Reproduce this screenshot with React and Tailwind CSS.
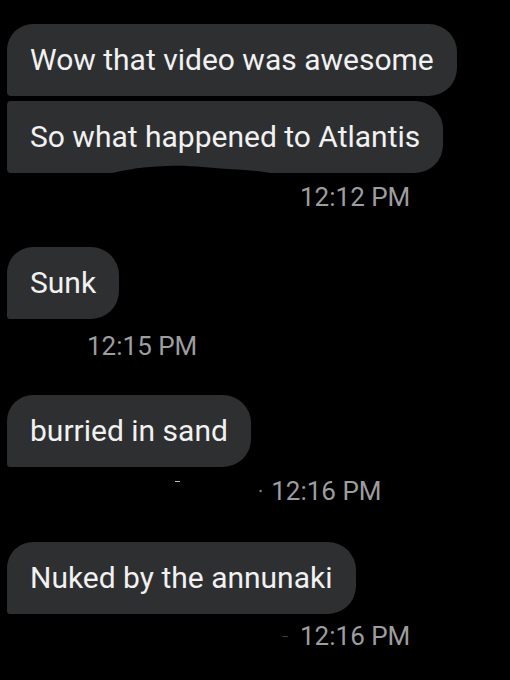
import React from 'react';

const messages = [
    { id: 1, text: 'Wow that video was awesome', shape: 'first', mt: 'mt-[24px]' },
    { id: 2, text: 'So what happened to Atlantis', shape: 'last', mt: 'mt-[5px]', smudge: true },
];

// bubble corner styles: grouped messages share a flat-ish left edge
const shapes = {
    first: 'rounded-tl-[26px] rounded-bl-[4px]',
    last: 'rounded-tl-[4px] rounded-bl-[4px]',
    single: 'rounded-tl-[26px] rounded-bl-[3px]',
};

const Bubble = ({ text, shape = 'single', className = '', smudge = false }) => (
    <div className={`relative ml-[7px] flex h-[72px] w-fit items-center rounded-r-[28px] bg-[#2e2f31] pl-[23px] pr-[23px] ${shapes[shape]} ${className}`}>
        <span className="text-[30px] leading-none text-[#f1f1f1]">{text}</span>
        {smudge && (
            // the black scribble someone drew over the screenshot
            <svg className="absolute left-[90px] top-[62px]" width="190" height="14" viewBox="0 0 190 14">
                <path d="M0 14 C20 8 40 4 70 3 C95 2 110 5 130 6 C150 7 170 8 190 14 Z" fill="#000" />
            </svg>
        )}
    </div>
);

const Stamp = ({ time, className = '', dot = false }) => (
    <div className={`flex h-[30px] items-center text-[26px] leading-none text-[#9c9d9f] ${className}`}>
        {dot && <span className="mr-[8px] text-[20px] text-[#8a8b8d]">·</span>}
        {time}
    </div>
);

export default function App() {
    return (
        <div className="min-h-[680px] w-[510px] overflow-hidden bg-black font-['Roboto',sans-serif]">
            <div className="flex flex-col">
                {messages.map((m) => (
                    <Bubble key={m.id} text={m.text} shape={m.shape} className={m.mt} smudge={m.smudge} />
                ))}
                <Stamp time="12:12 PM" className="ml-[300px] mt-[9px]" />

                <Bubble text="Sunk" className="mt-[35px]" />
                <Stamp time="12:15 PM" className="ml-[87px] mt-[12px]" />

                <Bubble text="burried in sand" className="mt-[34px]" />
                <div className="relative">
                    <Stamp time="12:16 PM" dot className="ml-[258px] mt-[9px]" />
                    <span className="absolute left-[175px] top-[14px] h-[1px] w-[5px] bg-[#bbbbbb]" />
                </div>

                <Bubble text="Nuked by the annunaki" className="mt-[36px]" />
                <div className="relative">
                    <Stamp time="12:16 PM" className="ml-[300px] mt-[7px]" />
                    <span className="absolute left-[282px] top-[22px] h-[1px] w-[6px] bg-[#3a3a3a]" />
                </div>
            </div>
        </div>
    );
}
